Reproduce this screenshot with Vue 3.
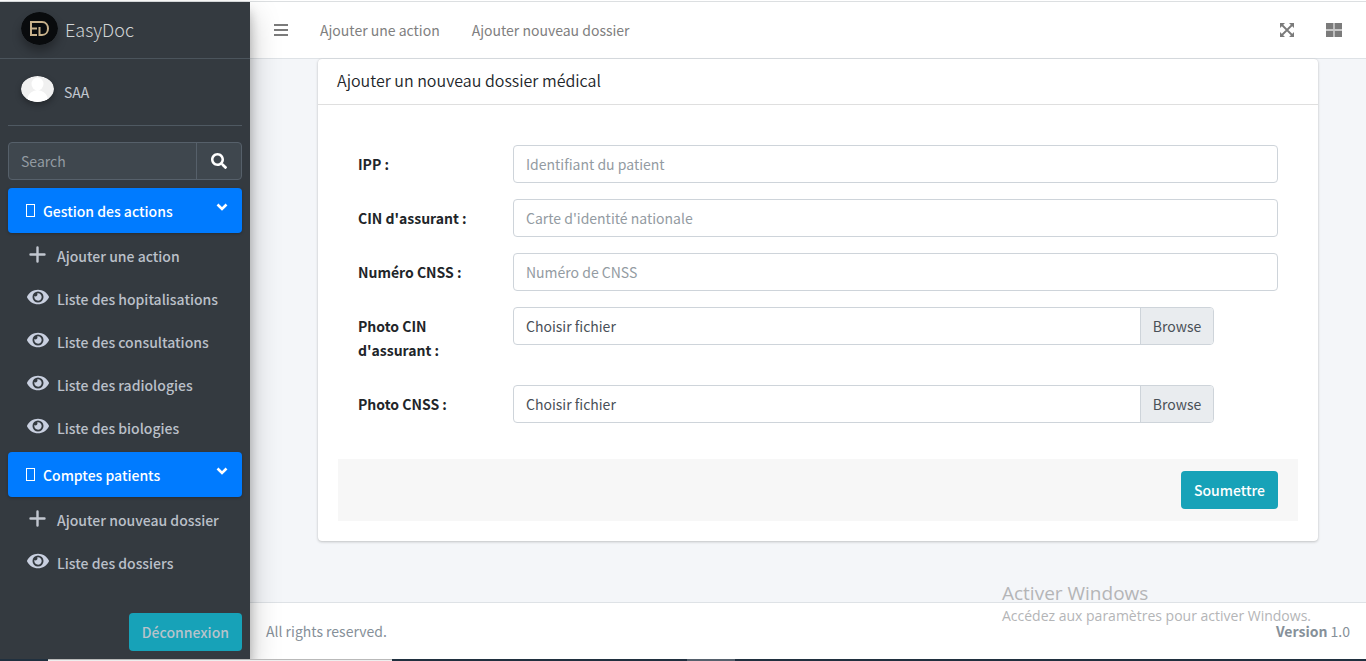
<script setup>
import { ref } from 'vue'

const groups = ref([
  {
    title: 'Gestion des actions',
    items: [
      { icon: 'plus', label: 'Ajouter une action' },
      { icon: 'eye', label: 'Liste des hopitalisations' },
      { icon: 'eye', label: 'Liste des consultations' },
      { icon: 'eye', label: 'Liste des radiologies' },
      { icon: 'eye', label: 'Liste des biologies' }
    ]
  },
  {
    title: 'Comptes patients',
    items: [
      { icon: 'plus', label: 'Ajouter nouveau dossier' },
      { icon: 'eye', label: 'Liste des dossiers' }
    ]
  }
])

const fields = [
  { id: 'ipp', label: 'IPP :', placeholder: 'Identifiant du patient' },
  { id: 'cin', label: "CIN d'assurant :", placeholder: "Carte d'identité nationale" },
  { id: 'cnss', label: 'Numéro CNSS :', placeholder: 'Numéro de CNSS' }
]

const files = [
  { id: 'photo-cin', label: "Photo CIN d'assurant :" },
  { id: 'photo-cnss', label: 'Photo CNSS :' }
]
</script>

<template>
  <div class="page">
    <div class="topline"></div>
    <div class="shell">
      <aside class="sidebar">
        <a class="brand" href="#">
          <svg class="logo" viewBox="0 0 37 33" aria-hidden="true">
            <ellipse cx="18.500" cy="16.500" rx="18.500" ry="16.500" fill="#090b0d" />
            <g fill="none" stroke="#c8b18b" stroke-width="2">
              <path d="M17 10H10v13h6M10 16.500h6" />
              <path d="M15 10h6c8 0 8 13 0 13h-2.500v-8" />
            </g>
          </svg>
          <span>EasyDoc</span>
        </a>
        <div class="user">
          <svg class="avatar" viewBox="0 0 33 26" aria-hidden="true">
            <defs><clipPath id="avatar-clip"><ellipse cx="16.500" cy="13" rx="16.500" ry="13" /></clipPath></defs>
            <g clip-path="url(#avatar-clip)">
              <rect width="33" height="26" fill="#f0f0f0" />
              <ellipse cx="16.500" cy="8" rx="6" ry="6.500" fill="#fff" />
              <path d="M6 26c0-8 4-11 10.500-12C23 15 27 18 27 26z" fill="#fff" />
            </g>
          </svg>
          <a href="#">SAA</a>
        </div>
        <form class="search" @submit.prevent>
          <input type="search" placeholder="Search" aria-label="Search" />
          <button type="submit" aria-label="Search">
            <svg width="16" height="16" viewBox="0 0 512 512" fill="#fff"><path d="M505 442.700L405.300 343c-4.500-4.500-10.600-7-17-7H372c27.600-35.300 44-79.700 44-128C416 93.100 322.900 0 208 0S0 93.100 0 208s93.100 208 208 208c48.300 0 92.700-16.400 128-44v16.300c0 6.400 2.500 12.500 7 17l99.700 99.700c9.400 9.400 24.600 9.400 33.900 0l28.300-28.300c9.400-9.400 9.400-24.600.1-34zM208 336c-70.700 0-128-57.200-128-128 0-70.700 57.200-128 128-128 70.700 0 128 57.200 128 128 0 70.700-57.200 128-128 128z" /></svg>
          </button>
        </form>
        <nav>
          <section v-for="g in groups" :key="g.title">
            <a class="group" href="#">
              <span class="box"></span>
              <span>{{ g.title }}</span>
              <svg class="chevron" width="12" height="12" viewBox="0 0 12 12"><path d="M1.500 3.500L6 8l4.500-4.500" fill="none" stroke="#fff" stroke-width="2.600" /></svg>
            </a>
            <ul>
              <li v-for="i in g.items" :key="i.label">
                <a href="#">
                  <svg v-if="i.icon === 'plus'" class="icon" viewBox="0 0 22 20"><path d="M10.500 3.500v14M3.500 10.500h14" fill="none" stroke="#c2c7d0" stroke-width="2.400" stroke-linecap="round" /></svg>
                  <svg v-else class="icon" viewBox="0 0 576 512" fill="#c9d0e0"><path d="M572.520 241.400C518.290 135.590 410.930 64 288 64S57.680 135.640 3.480 241.410a32.350 32.350 0 0 0 0 29.190C57.710 376.410 165.070 448 288 448s230.320-71.640 284.520-177.410a32.350 32.350 0 0 0 0-29.190zM288 400a144 144 0 1 1 144-144 143.930 143.930 0 0 1-144 144zm0-240a95.310 95.310 0 0 0-25.310 3.790 47.850 47.850 0 0 1-66.900 66.900A95.780 95.780 0 1 0 288 160z" /></svg>
                  <span>{{ i.label }}</span>
                </a>
              </li>
            </ul>
          </section>
        </nav>
        <button class="btn logout" type="button">Déconnexion</button>
      </aside>

      <div class="main">
        <header>
          <button type="button" aria-label="Menu">
            <svg width="14" height="16" viewBox="0 0 14 16"><path d="M0 3h14M0 8h14M0 13h14" stroke="#7b7b7b" stroke-width="2" /></svg>
          </button>
          <a href="#">Ajouter une action</a>
          <a href="#">Ajouter nouveau dossier</a>
          <button class="expand" type="button" aria-label="Plein écran">
            <svg width="14" height="14" viewBox="0 0 14 14"><path d="M2 2l10 10M12 2L2 12" stroke="#7b7b7b" stroke-width="1.800" /><path d="M0 0h5L0 5zM14 0v5L9 0zM0 14V9l5 5zM14 14H9l5-5z" fill="#7b7b7b" /></svg>
          </button>
          <button type="button" aria-label="Panneaux">
            <svg width="16" height="14" viewBox="0 0 16 14" fill="#7b7b7b"><path d="M0 0h7.500v6H0zM8.500 0H16v6H8.500zM0 8h7.500v6H0zM8.500 8H16v6H8.500z" /><path d="M0 6h16v2H0z" fill="#c8c8c8" /></svg>
          </button>
        </header>

        <main>
          <form class="card" @submit.prevent>
            <h1>Ajouter un nouveau dossier médical</h1>
            <div class="body">
              <div class="rows">
                <div v-for="f in fields" :key="f.id" class="row">
                  <label class="name" :for="f.id">{{ f.label }}</label>
                  <input :id="f.id" type="text" :placeholder="f.placeholder" />
                </div>
                <div v-for="f in files" :key="f.id" class="row file-row">
                  <label class="name" :for="f.id">{{ f.label }}</label>
                  <div class="file">
                    <input :id="f.id" type="file" />
                    <span class="choose">Choisir fichier</span>
                    <span class="browse">Browse</span>
                  </div>
                </div>
              </div>
              <div class="actions">
                <button class="btn" type="submit">Soumettre</button>
              </div>
            </div>
          </form>
        </main>

        <footer>
          <span>All rights reserved.</span>
          <span><b>Version</b> 1.0</span>
        </footer>
      </div>
    </div>
    <div class="taskbar"><i class="dark start"></i><i class="light"></i><i class="dark mid"></i><i class="tab"></i><i class="dark rest"></i></div>
    <div class="watermark">
      <p class="wm-title">Activer Windows</p>
      <p>Accédez aux paramètres pour activer Windows.</p>
    </div>
  </div>
</template>

<style>
body { margin: 0; }
</style>

<style scoped>
* { box-sizing: border-box; }
.page {
  position: relative;
  display: flex;
  flex-direction: column;
  min-height: 100vh;
  font-family: "Noto Sans CJK SC", "Noto Sans", sans-serif;
  font-size: 14px;
  line-height: 24px;
  color: #212529;
  background: #fff;
}
a { color: inherit; text-decoration: none; }
button, input { font: inherit; }
button { padding: 0; border: 0; background: none; cursor: pointer; }
svg { display: block; flex: none; }
.topline { height: 2px; border-bottom: 1px solid #dcdfe1; }
.shell { flex: 1; display: flex; }

.sidebar {
  position: relative;
  z-index: 1;
  width: 250px;
  flex: none;
  display: flex;
  flex-direction: column;
  padding: 0 8px 8px;
  background: #343a40;
  color: #c2c7d0;
  box-shadow: 0 14px 28px rgba(0, 0, 0, .25), 0 10px 10px rgba(0, 0, 0, .22);
}
.brand {
  display: flex;
  align-items: center;
  gap: 7px;
  height: 57px;
  margin: 0 -8px;
  padding: 0 21px 4px;
  border-bottom: 1px solid #4b545c;
  font-size: 18px;
  font-weight: 300;
  color: #d2d4d6;
}
.brand span { padding-top: 2px; }
.logo { width: 37px; height: 33px; border-radius: 50%; box-shadow: 0 6px 10px rgba(0, 0, 0, .3); }
.user {
  display: flex;
  gap: 10px;
  height: 67px;
  padding: 17px 13px 0;
  border-bottom: 1px solid #4f5962;
}
.user a { padding-top: 4px; }
.avatar { width: 33px; height: 26px; border-radius: 50%; box-shadow: 0 3px 6px rgba(0, 0, 0, .3); }
.search { display: flex; height: 38px; margin: 16px 0 8px; border: 1px solid #56606a; border-radius: 4px; background: #3f474e; }
.search input { flex: 1; min-width: 0; padding: 0 12px; border: 0; background: none; color: #fff; appearance: none; outline: 0; }
.search input::placeholder { color: #939ba2; opacity: 1; }
.search button { width: 45px; display: grid; place-items: center; border-left: 1px solid #56606a; }
.group {
  display: flex;
  align-items: center;
  gap: 8px;
  height: 45px;
  padding: 0 14px 0 18px;
  border-radius: 4px;
  background: #007bff;
  color: #fff;
  font-weight: 500;
  box-shadow: 0 1px 3px rgba(0, 0, 0, .25);
}
.box { width: 9px; height: 13px; border: 1px solid #fff; }
.chevron { margin: 0 0 8px auto; }
ul { list-style: none; margin: 0; padding: 1px 0 3px; }
li a { display: flex; align-items: center; gap: 8px; height: 43px; padding-left: 19px; font-weight: 500; color: #bbc0c9; }
.icon { width: 22px; height: 20px; margin-bottom: 3px; }
.btn { height: 38px; padding: 0 13px; border-radius: 4px; background: #17a2b8; color: #fff; font-weight: 500; }
.logout { align-self: flex-end; margin-top: auto; color: #b8c3cb; }

.main { flex: 1; min-width: 0; display: flex; flex-direction: column; background: #f4f6f9; }
header {
  display: flex;
  align-items: center;
  gap: 32px;
  height: 57px;
  padding: 0 24px;
  background: #fff;
  border-bottom: 1px solid #dee2e6;
  color: #808080;
}
.expand { margin-left: auto; }
main { flex: 1; padding: 0 48px 60px 68px; }
.card { border-radius: 4px; background: #fff; box-shadow: 0 0 1px rgba(0, 0, 0, .13), 0 1px 3px rgba(0, 0, 0, .2); }
h1 { margin: 0; height: 46px; padding: 0 19px; border-bottom: 1px solid #dfdfdf; font-size: 16px; font-weight: 350; line-height: 43px; }
.body { padding: 20px; }
.rows { padding: 20px 20px 36px; display: grid; gap: 16px; }
.row { display: grid; grid-template-columns: 155px 1fr; align-items: start; }
.file-row { min-height: 62px; }
.file-row:last-child { min-height: 38px; }
.name { padding: 7px 32px 0 0; font-weight: 700; }
.row > input { width: 100%; height: 38px; padding: 0 12px; border: 1px solid #ced4da; border-radius: 4px; outline: 0; }
.row > input::placeholder { color: #939ba2; opacity: 1; }
.file { position: relative; display: flex; width: calc(100% * 11 / 12); height: 38px; border: 1px solid #ced4da; border-radius: 4px; line-height: 36px; color: #495057; overflow: hidden; }
.file input { position: absolute; inset: 0; width: 100%; opacity: 0; }
.choose { flex: 1; padding: 0 12px; }
.browse { padding: 0 12px; border-left: 1px solid #ced4da; background: #e9ecef; }
.actions { display: flex; justify-content: flex-end; padding: 12px 20px; background: #f7f7f7; }
footer { display: flex; justify-content: space-between; height: 57px; padding: 16px 16px 0; background: #fff; border-top: 1px solid #dee2e6; color: #869099; }

.taskbar { position: relative; z-index: 2; display: flex; height: 2px; }
.dark { background: #20303f; }
.start { width: 48px; }
.light { width: 344px; background: #eee; border-top: 1px solid #b9b9b9; }
.mid { width: 295px; }
.tab { width: 48px; background: #56616d; }
.rest { flex: 1; }
.watermark { position: absolute; z-index: 3; right: 55px; bottom: 34px; color: #b4b5b7; font-family: "Open Sans", "Noto Sans", sans-serif; font-size: 14px; font-weight: 400; line-height: 22px; pointer-events: none; }
.watermark p { margin: 0; }
.watermark .wm-title { font-size: 19px; line-height: 24px; }
</style>
